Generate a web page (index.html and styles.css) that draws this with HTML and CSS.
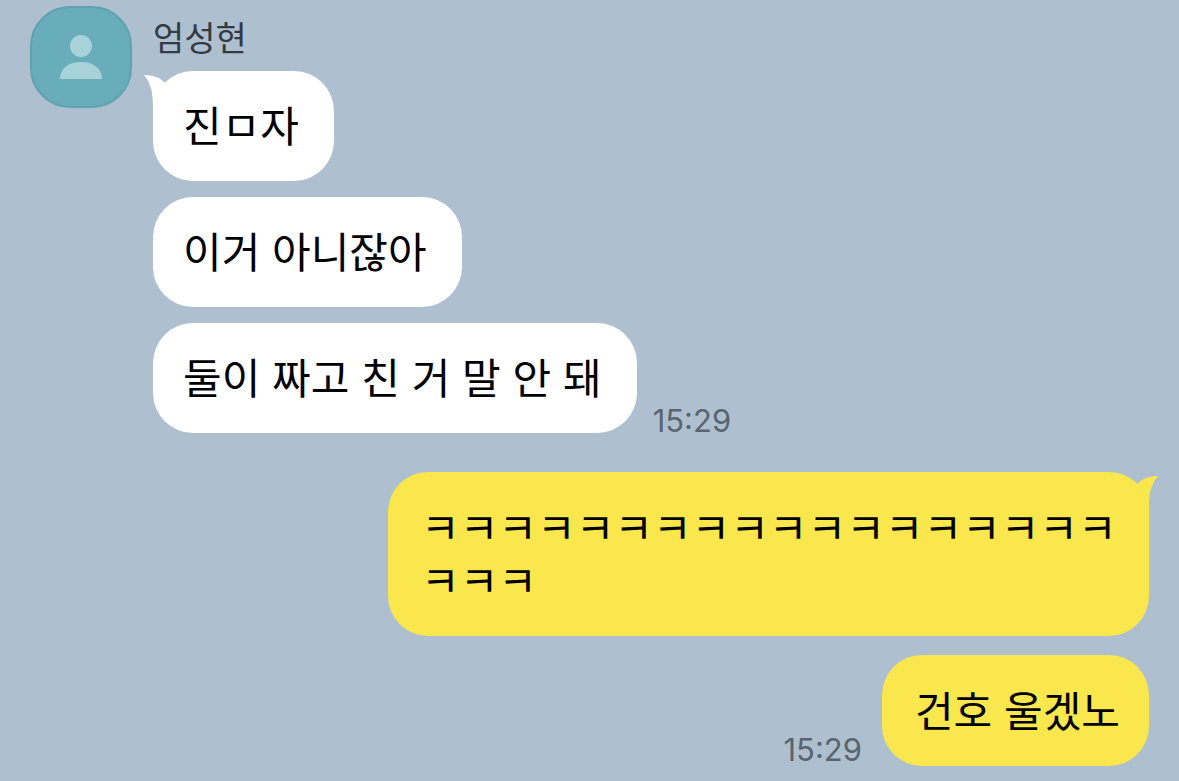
FILE: index.html
```
<!DOCTYPE html>
<html lang="ko">

<head>
    <meta charset="UTF-8">
    <meta name="viewport" content="width=device-width, initial-scale=1.0">
    <title>엄성현</title>
    <link rel="stylesheet" href="styles.css">
</head>

<body>
    <main class="chat">
        <section class="group received">
            <div class="avatar">
                <svg class="person" viewBox="0 0 42 44" aria-hidden="true">
                    <circle cx="21" cy="11" r="11" />
                    <path d="M0 44 C0 33 9 27 21 27 C33 27 42 33 42 44 Z" />
                </svg>
            </div>
            <div class="messages">
                <h2 class="name">엄성현</h2>
                <div class="row">
                    <p class="bubble">
                        <svg class="tail" viewBox="0 0 32 40" aria-hidden="true">
                            <path d="M0 0 C8 0 15 2 20 7 L32 20 L9 40 L9 32 C9 17 7 9 0 0 Z" />
                        </svg>
                        진ㅁ자
                    </p>
                </div>
                <div class="row">
                    <p class="bubble">이거 아니잖아</p>
                </div>
                <div class="row">
                    <p class="bubble">둘이 짜고 친 거 말 안 돼</p>
                    <time class="time">15:29</time>
                </div>
            </div>
        </section>

        <section class="group sent">
            <div class="messages">
                <div class="row">
                    <p class="bubble">
                        <svg class="tail" viewBox="0 0 32 40" aria-hidden="true">
                            <path d="M32 0 C24 0 17 2 11 8 L0 20 L23 40 L23 28 C23 16 26 7 32 0 Z" />
                        </svg>
                        ㅋㅋㅋㅋㅋㅋㅋㅋㅋㅋㅋㅋㅋㅋㅋㅋㅋㅋㅋㅋㅋ
                    </p>
                </div>
                <div class="row">
                    <time class="time">15:29</time>
                    <p class="bubble">건호 울겠노</p>
                </div>
            </div>
        </section>
    </main>
</body>

</html>
```
FILE: styles.css
```
* {
    margin: 0;
    padding: 0;
    box-sizing: border-box;
}

body {
    background-color: #aec0cf;
    color: #000;
    font-family: Inter, "Noto Sans CJK KR", sans-serif;
}

.chat {
    display: flex;
    flex-direction: column;
    gap: 39px;
    padding: 6px 30px 15px;
}

.group {
    display: flex;
    gap: 21px;
}

.avatar {
    display: flex;
    justify-content: center;
    align-items: center;
    flex: none;
    width: 102px;
    height: 102px;
    border: 2px solid #5fa2b0;
    border-radius: 40px;
    background-color: #69adbb;
}

.person {
    width: 42px;
    height: 44px;
    fill: #a7d2da;
}

.messages {
    display: flex;
    flex-direction: column;
    flex: 1;
    gap: 16px;
}

.name {
    height: 49px;
    color: #343b42;
    font-size: 34px;
    font-weight: 400;
    line-height: 66px;
}

.row {
    display: flex;
    align-items: flex-end;
    gap: 16px;
}

.bubble {
    position: relative;
    padding: 29px 35px 28px 30px;
    border-radius: 40px;
    background-color: #fff;
    font-size: 42px;
    line-height: 53px;
    word-break: break-all;
}

.tail {
    position: absolute;
    top: 4px;
    left: -9px;
    width: 32px;
    height: 40px;
    fill: #fff;
}

.time {
    color: #596570;
    font-size: 31px;
    line-height: 24px;
}

/* my messages */
.sent .messages {
    gap: 19px;
}

.sent .row {
    justify-content: flex-end;
    gap: 20px;
}

.sent .bubble {
    max-width: 68%;
    padding: 30px 29px 28px 33px;
    background-color: #fae64d;
}

.sent .tail {
    left: auto;
    right: -9px;
    fill: #fae64d;
}

.sent .time {
    padding-bottom: 4px;
}
```
